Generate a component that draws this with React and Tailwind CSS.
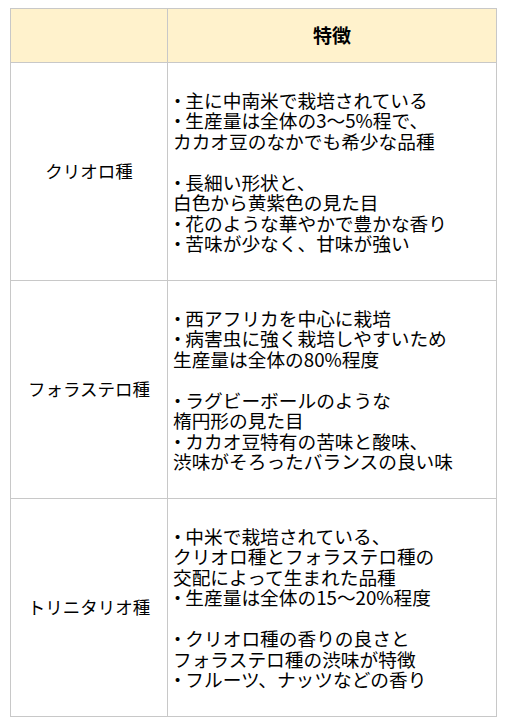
const rows = [
  {
    name: 'クリオロ種',
    lines: [
      '・主に中南米で栽培されている',
      '・生産量は全体の3～5%程で、',
      'カカオ豆のなかでも希少な品種',
      '',
      '・長細い形状と、',
      '白色から黄紫色の見た目',
      '・花のような華やかで豊かな香り',
      '・苦味が少なく、甘味が強い',
    ],
  },
  {
    name: 'フォラステロ種',
    lines: [
      '・西アフリカを中心に栽培',
      '・病害虫に強く栽培しやすいため',
      '生産量は全体の80%程度',
      '',
      '・ラグビーボールのような',
      '楕円形の見た目',
      '・カカオ豆特有の苦味と酸味、',
      '渋味がそろったバランスの良い味',
    ],
  },
  {
    name: 'トリニタリオ種',
    lines: [
      '・中米で栽培されている、',
      'クリオロ種とフォラステロ種の',
      '交配によって生まれた品種',
      '・生産量は全体の15～20%程度',
      '',
      '・クリオロ種の香りの良さと',
      'フォラステロ種の渋味が特徴',
      '・フルーツ、ナッツなどの香り',
    ],
  },
];

// bullet "・" is narrow in the reference font, use the proportional form
const Line = ({ text }) => {
  if (text.startsWith('・')) {
    return (
      <>
        <span className="[font-feature-settings:'palt'] mr-[3px]">・</span>
        {text.slice(1)}
      </>
    );
  }
  return text;
};

const App = () => {
  return (
    <div className="bg-white min-h-[723px] pl-[10px] pt-[8px] text-black font-['Noto_Sans_CJK_JP','Noto_Sans',sans-serif]">
      <table className="w-[487px] table-fixed border-collapse">
        <colgroup>
          <col className="w-[157px]" />
          <col />
        </colgroup>
        <thead>
          <tr className="h-[54px] bg-[#fff2cc]">
            <th className="border border-[#c8c8c8]"></th>
            <th className="border border-[#c8c8c8] text-center text-[19px] font-bold">特徴</th>
          </tr>
        </thead>
        <tbody>
          {rows.map((row) => (
            <tr key={row.name} className="h-[218px]">
              <td className="border border-[#c8c8c8] text-center align-middle text-[17.5px]">
                {row.name}
              </td>
              <td className="border border-[#c8c8c8] align-middle pl-[5px] pr-1 text-[18.7px] leading-[20.5px]">
                {row.lines.map((line, i) => (
                  <div key={i} className="h-[20.5px] whitespace-nowrap">
                    <Line text={line} />
                  </div>
                ))}
              </td>
            </tr>
          ))}
        </tbody>
      </table>
    </div>
  );
};

export default App;
